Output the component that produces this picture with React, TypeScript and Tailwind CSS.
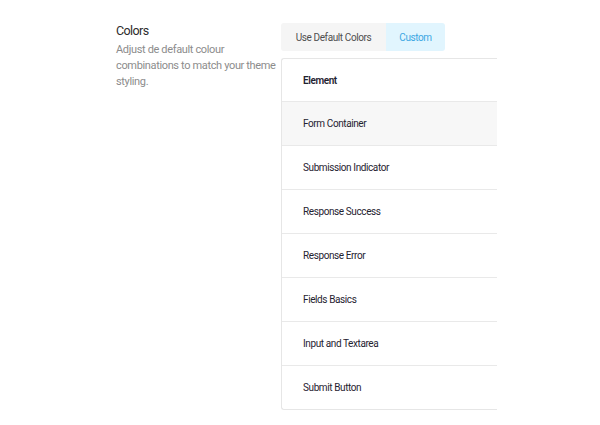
const rows = [
  "Form Container",
  "Submission Indicator",
  "Response Success",
  "Response Error",
  "Fields Basics",
  "Input and Textarea",
  "Submit Button",
]

export default function App() {
  return (
    <div className="w-[600px] h-[425px] bg-white font-['Roboto',sans-serif] flex pt-[23px] pl-[116px]">
      {/* Left description */}
      <div className="w-[165px]">
        <h2 className="text-[12.5px] leading-[15px] tracking-[-0.6px] text-[#2c2c2c]">Colors</h2>
        <p className="mt-[4px] text-[11px] leading-[16px] tracking-[-0.35px] text-[#8c8c8c] w-[160px]">
          Adjust de default colour combinations to match your theme styling.
        </p>
      </div>

      {/* Right panel */}
      <div className="w-[216px]">
        <div className="flex h-[28px] text-[10px] tracking-[-0.4px]">
          <button className="w-[105px] bg-[#f5f5f5] text-[#4f4f4f] rounded-l-[3px]">Use Default Colors</button>
          <button className="w-[59px] bg-[#e1f5fe] text-[#3aa6e3] rounded-r-[3px]">Custom</button>
        </div>
        <div className="mt-[7px] border-l border-t border-b border-[#e6e6e6] rounded-l-[3px] text-[10px] tracking-[-0.4px] text-[#1f2230]">
          <div className="h-[42px] flex items-center pl-[21px] font-semibold">Element</div>
          {rows.map((r, i) => (
            <div
              key={r}
              className={`h-[44px] flex items-center pl-[21px] border-t border-[#e9e9e9] ${i === 0 ? "bg-[#f7f7f7]" : ""}`}
            >
              {r}
            </div>
          ))}
        </div>
      </div>
    </div>
  )
}
